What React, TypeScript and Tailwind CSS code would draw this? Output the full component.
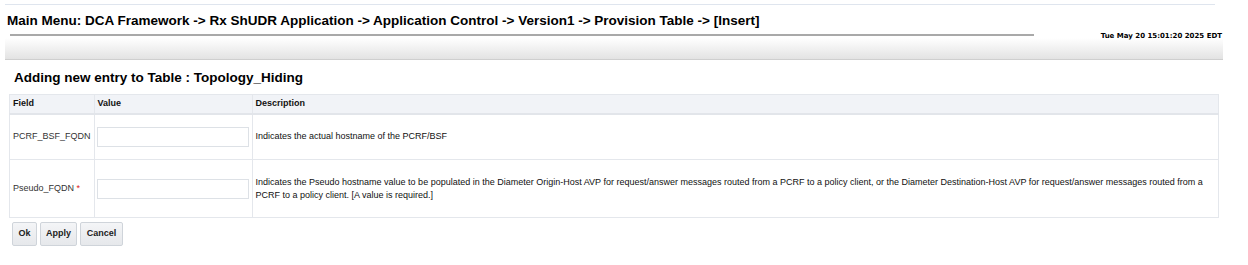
export default function App() {
  const cell = "border border-[#e4e7ec] px-[3px] align-middle";
  return (
    <div className="w-[1248px] h-[265px] bg-white font-['Liberation_Sans',Arial,sans-serif] text-black overflow-hidden">
      <div className="ml-[5px] mr-[33px] mt-[4px] border-t border-[#dfe5ee]" />
      <div className="flex items-end pl-[7px] pr-[26px]">
        <div className="flex-1">
          <div className="pt-[8px] text-[13.5px] font-bold leading-[16px]">
            Main Menu: DCA Framework -&gt; Rx ShUDR Application -&gt; Application Control -&gt; Version1 -&gt; Provision Table -&gt; [Insert]
          </div>
          <div className="mt-[5px] ml-[3px] mr-[67px] h-[2px] bg-[#a9a9a9]" />
        </div>
        <div className="font-['DejaVu_Sans',Verdana,sans-serif] text-[7px] font-bold leading-[8px] mb-[-4px]">
          Tue May 20 15:01:20 2025 EDT
        </div>
      </div>
      <div className="ml-[5px] mr-[25px] mt-[2px] h-[22px] bg-gradient-to-b from-white to-[#e3e3e3] border-b border-[#cfcfcf]" />
      <div className="pl-[14px] pt-[10px] text-[13.5px] font-bold leading-[16px]">
        Adding new entry to Table : Topology_Hiding
      </div>
      <div className="pl-[9px] pr-[29px] pt-[8px]">
        <table className="w-full border-collapse text-[9px] leading-[13px] text-[#111]">
          <thead>
            <tr className="h-[19px] bg-[#f1f3f7] border-b-2 border-[#e2e5ea]">
              <th className={`${cell} w-[82px] text-left font-bold`}>Field</th>
              <th className={`${cell} w-[156px] text-left font-bold`}>Value</th>
              <th className={`${cell} text-left font-bold`}>Description</th>
            </tr>
          </thead>
          <tbody>
            <tr className="h-[46px]">
              <td className={`${cell} text-[#333]`}>PCRF_BSF_FQDN</td>
              <td className={`${cell} pl-[2px]`}>
                <input className="block w-[152px] h-[20px] border border-[#dde1e6] outline-none" />
              </td>
              <td className={cell}>Indicates the actual hostname of the PCRF/BSF</td>
            </tr>
            <tr className="h-[58px]">
              <td className={`${cell} text-[#333]`}>
                Pseudo_FQDN <span className="text-[#d22]">*</span>
              </td>
              <td className={`${cell} pl-[2px]`}>
                <input className="block w-[152px] h-[20px] border border-[#dde1e6] outline-none" />
              </td>
              <td className={cell}>
                Indicates the Pseudo hostname value to be populated in the Diameter Origin-Host AVP for request/answer messages routed from a PCRF to a policy client, or the Diameter Destination-Host AVP for request/answer messages routed from a PCRF to a policy client. [A value is required.]
              </td>
            </tr>
          </tbody>
        </table>
        <div className="flex gap-[3px] pl-[3px] pt-[4px]">
          {[
            ["Ok", "w-[25px]"],
            ["Apply", "w-[37px]"],
            ["Cancel", "w-[43px]"],
          ].map(([b, w]) => (
            <button
              key={b}
              className={`${w} h-[24px] text-[9px] font-bold bg-gradient-to-b from-[#f4f5f7] to-[#e6e8eb] border border-[#cfd4da] rounded-[2px] text-[#222]`}
            >
              {b}
            </button>
          ))}
        </div>
      </div>
    </div>
  );
}
